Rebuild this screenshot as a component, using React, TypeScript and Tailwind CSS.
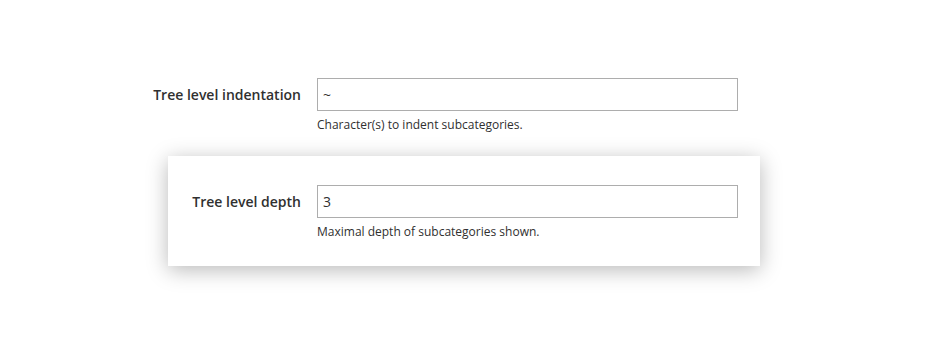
import React from "react";

export default function App() {
  return (
    <div className="w-[940px] h-[350px] bg-white text-[#303030] font-['Open_Sans',sans-serif] overflow-hidden">
      <div className="pt-[78px] pl-[140px] flex">
        <div className="w-[177px] h-[32px] flex items-center justify-end pr-[16px] whitespace-nowrap text-[14px] font-semibold">
          Tree level indentation
        </div>
        <div className="flex flex-col">
          <div className="w-[421px] h-[33px] border border-[#adadad] flex items-center px-[5px] text-[14px]">~</div>
          <div className="mt-[6px] text-[12px] leading-[16px]">Character(s) to indent subcategories.</div>
        </div>
      </div>
      <div className="mt-[23px] ml-[168px] w-[592px] h-[110px] bg-white shadow-[0_4px_20px_rgba(0,0,0,0.28)] pt-[29px] flex">
        <div className="w-[149px] h-[32px] flex items-center justify-end pr-[16px] whitespace-nowrap text-[14px] font-semibold">
          Tree level depth
        </div>
        <div className="flex flex-col">
          <div className="w-[421px] h-[33px] border border-[#adadad] flex items-center px-[5px] text-[14px]">3</div>
          <div className="mt-[6px] text-[12px] leading-[16px]">Maximal depth of subcategories shown.</div>
        </div>
      </div>
    </div>
  );
}
